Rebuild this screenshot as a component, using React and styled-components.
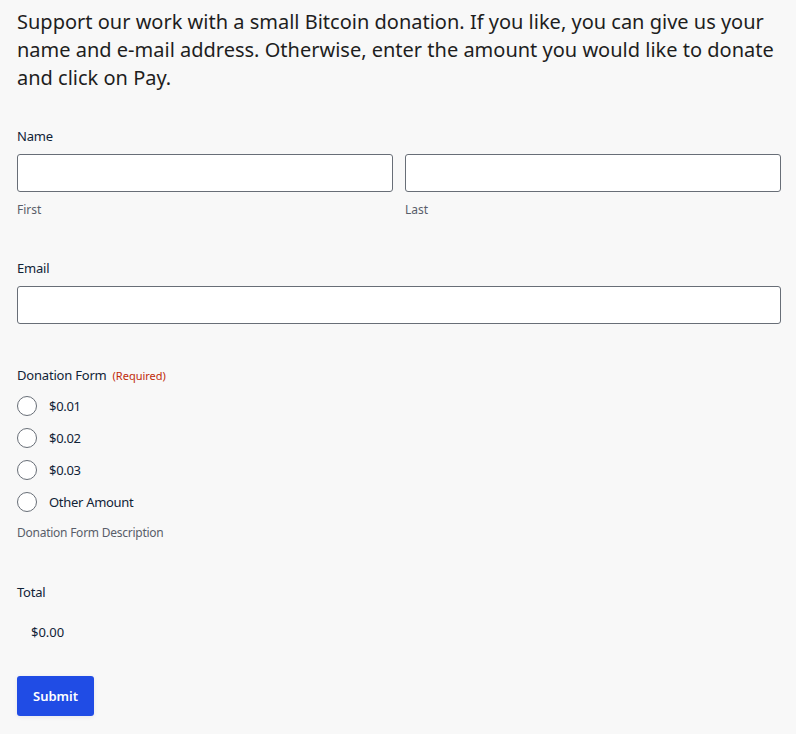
import React, { useState } from 'react';
import styled, { createGlobalStyle } from 'styled-components';

const GlobalStyle = createGlobalStyle`
  html, body {
    margin: 0;
    padding: 0;
    background: #f8f8f8;
  }
  body {
    font-family: "Noto Sans", "Open Sans", sans-serif;
    color: #112337;
  }
`;

const Page = styled.div`
  padding: 8px 15px 18px 17px;
`;

const Intro = styled.p`
  margin: 0 0 35px;
  font-size: 20px;
  line-height: 28px;
  color: #1e1e1e;
`;

const Field = styled.div`
  margin-bottom: ${props => props.gap || 0}px;
`;

const Label = styled.div`
  font-size: 13px;
  line-height: 18px;
  font-weight: 400;
  letter-spacing: -0.2px;
  color: #112337;
  margin-bottom: ${props => props.mb ?? 9}px;
`;

const Required = styled.span`
  color: #c02b0a;
  font-size: 11px;
  font-weight: 400;
  letter-spacing: 0;
  margin-left: 6px;
`;

const Row = styled.div`
  display: grid;
  grid-template-columns: 1fr 1fr;
  gap: 12px;
`;

const Input = styled.input`
  display: block;
  box-sizing: border-box;
  width: 100%;
  height: 38px;
  border: 1px solid #686e77;
  border-radius: 3px;
  background: #fff;
  font: inherit;
  padding: 0 12px;
`;

const SubLabel = styled.div`
  font-size: 12px;
  line-height: 16px;
  color: #585e6a;
  margin-top: 10px;
`;

const Choices = styled.div`
  display: flex;
  flex-direction: column;
  gap: 12px;
`;

const Choice = styled.label`
  display: flex;
  align-items: center;
  gap: 12px;
  font-size: 13px;
  line-height: 20px;
  letter-spacing: -0.3px;
  color: #112337;
`;

const Radio = styled.span`
  box-sizing: border-box;
  width: 20px;
  height: 20px;
  border-radius: 50%;
  border: 1px solid #686e77;
  background: #fff;
`;

const Description = styled.div`
  font-size: 12px;
  line-height: 16px;
  letter-spacing: -0.25px;
  color: #585e6a;
  margin-top: 13px;
`;

const Total = styled.div`
  font-size: 13px;
  line-height: 18px;
  padding-left: 14px;
  margin-top: 22px;
`;

const SubmitButton = styled.button`
  margin-top: 35px;
  width: 77px;
  height: 40px;
  border: none;
  border-radius: 3px;
  background: #204ce5;
  color: #fff;
  font: inherit;
  font-size: 13px;
  font-weight: 600;
  box-shadow: 0 1px 4px rgba(18, 25, 97, 0.08);
`;

const amounts = ['$0.01', '$0.02', '$0.03', 'Other Amount'];

export default function App() {
  const [first, setFirst] = useState('');
  const [last, setLast] = useState('');
  const [email, setEmail] = useState('');

  return (
    <Page>
      <GlobalStyle />
      <Intro>
        Support our work with a small Bitcoin donation. If you like, you can give us your
        name and e-mail address. Otherwise, enter the amount you would like to donate
        and click on Pay.
      </Intro>

      <Field gap={41}>
        <Label>Name</Label>
        <Row>
          <div>
            <Input value={first} onChange={e => setFirst(e.target.value)} />
            <SubLabel>First</SubLabel>
          </div>
          <div>
            <Input value={last} onChange={e => setLast(e.target.value)} />
            <SubLabel>Last</SubLabel>
          </div>
        </Row>
      </Field>

      <Field gap={42}>
        <Label>Email</Label>
        <Input value={email} onChange={e => setEmail(e.target.value)} />
      </Field>

      <Field gap={42}>
        <Label mb={11}>
          Donation Form<Required>(Required)</Required>
        </Label>
        <Choices>
          {amounts.map(a => (
            <Choice key={a}>
              <Radio />
              {a}
            </Choice>
          ))}
        </Choices>
        <Description>Donation Form Description</Description>
      </Field>

      <Field>
        <Label mb={0}>Total</Label>
        <Total>$0.00</Total>
      </Field>

      <SubmitButton>Submit</SubmitButton>
    </Page>
  );
}
